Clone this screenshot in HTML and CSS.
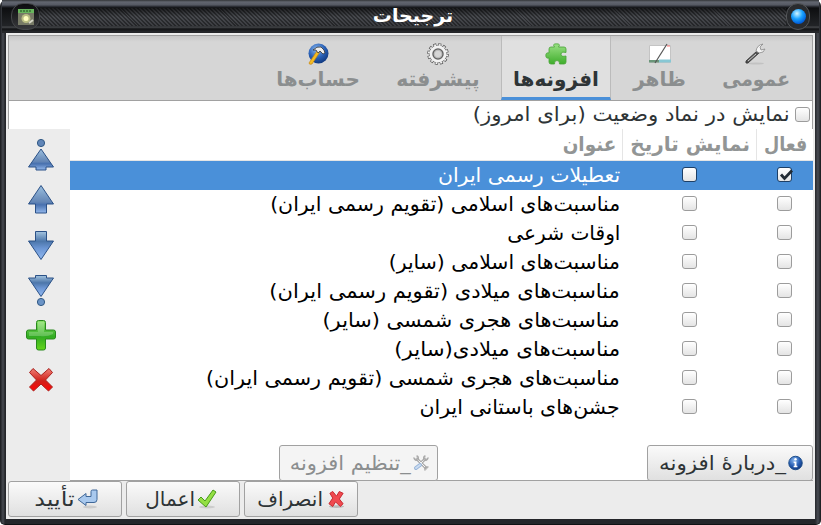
FILE: index.html
```html
<!DOCTYPE html>
<html lang="fa" dir="rtl">
<head>
<meta charset="utf-8">
<title>ترجیحات</title>
<link rel="stylesheet" href="styles.css">
</head>
<body>
<svg width="0" height="0" class="defs" aria-hidden="true">
  <defs>
    <linearGradient id="blueUp" x1="0" y1="0" x2="0" y2="1"><stop offset="0" stop-color="#9cc0df"/><stop offset=".6" stop-color="#6385b5"/><stop offset=".7" stop-color="#4871af"/><stop offset="1" stop-color="#94b8ec"/></linearGradient>
    <linearGradient id="blueDown" x1="0" y1="0" x2="0" y2="1"><stop offset="0" stop-color="#a4c4df"/><stop offset=".35" stop-color="#4c76aa"/><stop offset=".6" stop-color="#6c96d4"/><stop offset="1" stop-color="#91b9f0"/></linearGradient>
    <linearGradient id="green" x1="0" y1="0" x2="0" y2="1"><stop offset="0" stop-color="#8ce36a"/><stop offset=".55" stop-color="#31ac22"/><stop offset="1" stop-color="#65d51b"/></linearGradient>
    <linearGradient id="puzzle" x1="0" y1="0" x2="0" y2="1"><stop offset="0" stop-color="#9be085"/><stop offset="1" stop-color="#3fae2c"/></linearGradient>
    <linearGradient id="red" x1="0" y1="0" x2="0" y2="1"><stop offset="0" stop-color="#f07f76"/><stop offset=".55" stop-color="#cf2019"/><stop offset="1" stop-color="#ff0505"/></linearGradient>
    <radialGradient id="globe" cx=".4" cy=".3" r=".7"><stop offset="0" stop-color="#8ab8ee"/><stop offset=".6" stop-color="#285fb5"/><stop offset="1" stop-color="#123b82"/></radialGradient>
  </defs>
</svg>
<div class="window">
  <header class="titlebar" dir="ltr">
    <span class="app-icon"><svg width="16" height="16" viewBox="0 0 16 16"><path fill="#68b65c" d="M0 0h16v4H0z"/><path stroke="#214d20" stroke-dasharray="2 1" d="M2 2h12"/><path fill="#777a66" d="M0 4h16v12H0z"/><circle cx="8" cy="9.5" r="4.5" fill="#b9bd83"/><circle cx="8" cy="9.5" r="2.5" fill="#fffec0"/><path stroke="#d5d5c5" stroke-width="2" d="m11 14 4-3"/></svg></span>
    <span class="weave"><b class="caption" dir="rtl">ترجیحات</b></span>
    <span class="close"><i></i></span>
  </header>
  <main class="client">
    <nav class="tabs">
      <div class="tab t1"><svg width="22" height="22" viewBox="0 0 22 22"><ellipse cx="12" cy="20.5" rx="8" ry="1" fill="#c2c2c2"/><path d="M2 18 13 8l2 2L4 20q-3 1-2-2z" fill="#555" stroke="#303030" stroke-width=".8"/><path d="m4 18 8-7" stroke="#ccc"/><path d="M12 8q1-6 7-7l-3 3 1 3 4-1q-1 4-6 4z" fill="#f4f4f4" stroke="#888" stroke-width=".8"/></svg><b>عمومی</b></div>
      <div class="tab t2"><svg width="22" height="22" viewBox="0 0 22 22"><path d="M.5 2.500h21v17H.5z" fill="#fff" stroke="#c4c4c4"/><path d="M10 16.500h12v3H10z" fill="#87c7d4"/><path d="M0 17h10v2.500H0z" fill="#6b967a"/><path d="M18 3h3" stroke="#f77"/><path d="M18 1 6 20" stroke="#555" stroke-width="1.200"/></svg><b>ظاهر</b></div>
      <div class="tab active t3"><svg width="22" height="22" viewBox="0 0 22 22"><path d="M6 4h3.500Q7 .8 11.500.8T13.500 4H19q2 0 2 2v3.500q-5-1.200-5 1.700t5 1.800V19q0 2-2 2h-4.500q.5-3.500-2.500-3.500T9.500 21H6q-2 0-2-2v-4Q.8 15.800.8 12.500T4 10V6q0-2 2-2z" fill="url(#puzzle)" stroke="#48a335" stroke-width=".8"/></svg><b>افزونه‌ها</b></div>
      <div class="tab t4"><svg width="22" height="22" viewBox="0 0 22 22"><circle cx="11" cy="11" r="9.500" fill="none" stroke="#555" stroke-width="2.600" stroke-dasharray="3 1.970"/><circle cx="11" cy="11" r="8.700" fill="none" stroke="#666" stroke-width="1"/><circle cx="11" cy="11" r="6.500" fill="none" stroke="#f2f2f2" stroke-width="4"/><circle cx="11" cy="11" r="9.200" fill="none" stroke="#f5f5f5" stroke-width="1.800" stroke-dasharray="1.800 3.017" stroke-dashoffset="-.6"/><circle cx="11" cy="11" r="5" fill="#d6d6d6" stroke="#666" stroke-width="1.500"/><circle cx="11" cy="11" r="3.800" fill="none" stroke="#aaa" stroke-width=".7"/></svg><b>پیشرفته</b></div>
      <div class="tab t5"><svg width="22" height="22" viewBox="0 0 22 22"><circle cx="11.500" cy="10.500" r="10" fill="url(#globe)"/><path d="M2 20 10 8l2.500 1.500L5 21q-3 1-3-1z" fill="#f5bd22" stroke="#c48415" stroke-width=".7"/><path d="M6 7q4-4 8-3l3 3 1 3-2 1-3-3-2 2-2-3z" fill="#eee" stroke="#333" stroke-width=".8"/></svg><b>حساب‌ها</b></div>
    </nav>
    <label class="status"><i class="box"></i><span>نمایش در نماد وضعیت (برای امروز)</span></label>
    <section class="content">
      <div class="list">
        <div class="head"><div class="h1"><b>فعال</b></div><div class="h2"><b>نمایش تاریخ</b></div><div class="h3"><b>عنوان</b></div></div>
        <div class="row selected r1"><i class="box"><svg width="18" height="16" viewBox="0 0 18 16"><path d="m3 6.500 3.500 4L14 2.500" fill="none" stroke="#222b33" stroke-width="2.800"/></svg></i><i class="box"></i><span>تعطیلات رسمی ایران</span></div>
        <div class="row r2"><i class="box"></i><i class="box"></i><span>مناسبت‌های اسلامی (تقویم رسمی ایران)</span></div>
        <div class="row r3"><i class="box"></i><i class="box"></i><span>اوقات شرعی</span></div>
        <div class="row r4"><i class="box"></i><i class="box"></i><span>مناسبت‌های اسلامی (سایر)</span></div>
        <div class="row r5"><i class="box"></i><i class="box"></i><span>مناسبت‌های میلادی (تقویم رسمی ایران)</span></div>
        <div class="row r6"><i class="box"></i><i class="box"></i><span>مناسبت‌های هجری شمسی (سایر)</span></div>
        <div class="row r7"><i class="box"></i><i class="box"></i><span>مناسبت‌های میلادی(سایر)</span></div>
        <div class="row r8"><i class="box"></i><i class="box"></i><span>مناسبت‌های هجری شمسی (تقویم رسمی ایران)</span></div>
        <div class="row r9"><i class="box"></i><i class="box"></i><span>جشن‌های باستانی ایران</span></div>
        <div class="plugin-actions">
          <div class="button about"><svg width="15" height="16" viewBox="0 0 16 16"><circle cx="8" cy="8" r="7.200" fill="url(#globe)" stroke="#174985"/><circle cx="8" cy="4" r="1.300" fill="#fff"/><path d="M6 6.500h3V11h1v1.500H6V11h1V8H6z" fill="#fff"/></svg><span>_دربارهٔ افزونه</span></div>
          <div class="button configure"><svg width="16" height="16" viewBox="0 0 16 16" fill="none" stroke-linecap="round"><path d="m4 4 9 9M12 4 8 8" stroke="#aaa" stroke-width="3"/><path d="m4 4 9 9M12 4 8 8" stroke="#f3f3f3"/><path d="M1 3q1 3 4 2 1-3-1-4M15 3q-1 3-4 2-1-3 1-4M12 15q-1-3 3-3" stroke="#aaa" stroke-width="1.400"/><path d="m3 13 4-3" stroke="#98b5d8" stroke-width="4"/><path d="m3 13 4-3" stroke="#cbdcf2" stroke-width="2"/></svg><span>_تنظیم افزونه</span></div>
        </div>
      </div>
      <aside class="tools">
        <svg width="28" height="34" viewBox="0 0 28 34"><circle cx="14" cy="5" r="3.600" fill="#6186b8" stroke="#315985"/><path d="M14 11 26.500 29H19v3H9v-3H1.500z" fill="url(#blueUp)" stroke="#2b5187" stroke-linejoin="round"/></svg>
        <svg width="28" height="34" viewBox="0 0 28 34"><path d="M14 2.500 26.500 21H19.500v9h-11v-9H1.500z" fill="url(#blueUp)" stroke="#2b5187" stroke-linejoin="round"/></svg>
        <svg width="28" height="34" viewBox="0 0 28 34"><path d="M14 31.500 26.500 13H19.500V3.500h-11V13H1.500z" fill="url(#blueDown)" stroke="#2b5187" stroke-linejoin="round"/></svg>
        <svg width="28" height="34" viewBox="0 0 28 34"><path d="M14 23.500 26.500 5H19.500V2.500h-11V5H1.500z" fill="url(#blueDown)" stroke="#2b5187" stroke-linejoin="round"/><circle cx="14" cy="29" r="3.600" fill="#6b94c6" stroke="#315985"/></svg>
        <svg width="30" height="34" viewBox="0 0 30 34"><path d="M12.500 2.500h5q2 0 2 2V12h8q2 0 2 2v5q0 2-2 2h-8v9q0 2-2 2h-5q-2 0-2-2v-9h-8q-2 0-2-2v-5q0-2 2-2h8V4.500q0-2 2-2z" fill="url(#green)" stroke="#28891d"/><path d="M12 4h6v10h9v2q-6 3-13 2H3v-4h9z" fill="#fff" opacity=".22"/></svg>
        <svg width="26" height="34" viewBox="0 0 26 34"><path d="m5 5.500 8 7 8-7 3.500 4-7 7.500 7 7-4 4-7.500-7-7.500 7-4-4 7-7-7-7.500z" fill="url(#red)" stroke="#a9201c" stroke-linejoin="round"/></svg>
      </aside>
    </section>
    <footer class="footer">
      <div class="button cancel"><svg width="17" height="20" viewBox="0 0 18 20"><ellipse cx="9" cy="18" rx="8" ry="1.500" fill="#bbb"/><path d="m2 4 3-2 4 5 3-5 4 2-4 6 4 5-3 3-5-5-3 5-4-3 4-6z" fill="#f04a50" stroke="#c5232b"/></svg><span>انصراف</span></div>
      <div class="button apply"><svg width="20" height="20" viewBox="0 0 20 20"><ellipse cx="10" cy="18" rx="8" ry="1.500" fill="#ccc"/><path d="m1 11 3-3 4 4 8-11 3 2L9 18z" fill="#94df43" stroke="#479b18" stroke-linejoin="round"/></svg><span>اعمال</span></div>
      <div class="button ok"><svg width="21" height="20" viewBox="0 0 21 20"><ellipse cx="13" cy="18" rx="7" ry="1.500" fill="#ccc"/><path d="M1 10.500 9 4.500v3h5v-5q0-1.500 1.500-1.500H20v9.500q0 3-3 3H9v3z" fill="#a9c9ee" stroke="#3f6798" stroke-linejoin="round"/></svg><span>تأیید</span></div>
    </footer>
  </main>
</div>
</body>
</html>
```
FILE: styles.css
```css
* { box-sizing: border-box; }
body { margin: 0; width: 821px; height: 525px; overflow: hidden; background: #fff; font: 20px/29px "DejaVu Sans", sans-serif; color: #2e3436; }
svg { display: block; flex: none; overflow: visible; }
.defs { position: absolute; }
.window { width: 821px; height: 525px; padding: 0 6px 6px; border-radius: 6px 6px 5px 5px; background: linear-gradient(90deg, #17191c, #484b52 3px, #24262a 5px, #24262a 815px, #484b52 818px, #17191c); border-bottom: 1px solid #101214; }
.titlebar { height: 33px; margin: 0 -4px; display: flex; align-items: center; background: linear-gradient(#333538, #626670 2px, #555963 5px, #353840 6px, #0d0e10 8px, #222427 26px, #484a4d 27px, #111214 29px, #292b2e 32px, #202124); }
.app-icon { width: 29px; height: 27px; margin-left: 9px; border-radius: 12px; display: grid; place-items: center; background: linear-gradient(#0c0c0e, #38393c); border: 1px solid #45474a; }
.weave { flex: 1; height: 18px; margin-top: 1px; background: linear-gradient(#0009, transparent 9px, #0003), repeating-linear-gradient(45deg, #2c2e31 0 1.4px, #484a4f 1.4px 2.8px); display: flex; justify-content: center; }
.caption { color: #fff; font-size: 19px; line-height: 15px; white-space: nowrap; }
.close { width: 24px; height: 27px; margin-right: 9px; border-radius: 12px; background: #292b2e; border: 1px solid #55575a; display: grid; place-items: center; }
.close i { width: 15px; height: 15px; border-radius: 50%; background: radial-gradient(circle at 40% 30%, #d1f5ff, #18a1ff 40%, #0059d7 75%, #062e68); }
.client { height: 486px; padding: 2px 2px 0; background: #ececec; }
.tabs { height: 66px; display: flex; border: 1px solid #a1a1a1; background: linear-gradient(#c8c8c8, #d6d6d6 6px); }
.tab { height: 64px; padding-top: 7px; display: flex; flex-direction: column; align-items: center; color: #8b8e8f; white-space: nowrap; }
.t1 { width: 114px; } .t2 { width: 87px; padding-left: 10px; } .t3 { width: 110px; } .t4 { width: 127px; } .t5 { width: 112px; }
.t1 b { transform: translateX(1px) scaleX(.94); }
.t4 b { transform: scaleX(1.02); }
.active { background: linear-gradient(#d0d0d0, #e0e0e0 5px); color: #2e3436; border-inline: 1px solid #bbb; border-bottom: 3px solid #4a90d9; }
.status { height: 28px; padding: 0 2px 2px 0; display: flex; align-items: center; gap: 5px; background: #fff; border-inline: 1px solid #a1a1a1; white-space: nowrap; }
.status span { transform: scaleX(1.061); transform-origin: right; }
.box { width: 15px; height: 15px; flex: none; direction: ltr; border: 1px solid #9c9c9c; border-radius: 3px; background: linear-gradient(#fff, #e4e4e4); }
.content { height: 352px; display: flex; }
.list { width: 743px; background: #fff; border-bottom: 1px solid #a1a1a1; }
.tools { width: 62px; padding: 9px 0 0 4px; display: flex; flex-direction: column; align-items: center; gap: 11px; }
.head { height: 32px; display: flex; border-bottom: 1px solid #e5e5e5; color: #929595; white-space: nowrap; overflow: hidden; }
.head div { padding-right: 6px; line-height: 30px; }
.head b { display: inline-block; transform-origin: right; }
.h1 { width: 57px; border-left: 1px solid #e5e5e5; } .h2 { width: 134px; border-left: 1px solid #e5e5e5; } .h3 { flex: 1; }
.h1 b { transform: scaleX(.88); } .h3 b { transform: scaleX(.92); }
.row { height: 29px; padding-right: 21px; display: flex; color: #000; white-space: nowrap; }
.row .box { margin-top: 6px; margin-left: 80px; }
.row .box + .box { margin-left: 62px; }
.row span { transform-origin: right; }
.r1 span, .r2 span, .r9 span { transform: scaleX(1.023); }
.r3 span { transform: scaleX(1.007); }
.r4 span { transform: scaleX(1.019); }
.r5 span { transform: scaleX(1.05); }
.r6 span { transform: scaleX(1.044); }
.r7 span { transform: scaleX(1.065); }
.r8 span { transform: scaleX(1.035); }
.row.selected { color: #fff; background: #4a90d9; }
.selected .box { border-color: #1d3f66; }
.plugin-actions { height: 36px; margin-top: 23px; display: flex; gap: 209px; }
.button { height: 36px; display: flex; align-items: center; gap: 2px; border: 1px solid #a1a1a1; border-radius: 3px; background: linear-gradient(#fafafa, #e0e0e0); white-space: nowrap; }
.button span { transform-origin: right; }
.about { width: 166px; padding-right: 9px; }
.about span { transform: scaleX(1.067); }
.configure { width: 159px; padding-right: 8px; color: #8b8e8f; background: #f4f4f4; }
.configure span { transform: scaleX(1.046); }
.footer { height: 36px; display: flex; justify-content: flex-end; gap: 4px; }
.footer .button { width: 114px; }
.footer .cancel { padding-right: 12px; gap: 5px; }
.footer .apply { padding-right: 22px; }
.footer .ok { padding-right: 23px; }
.ok span { transform: scaleX(1.2); }
```
